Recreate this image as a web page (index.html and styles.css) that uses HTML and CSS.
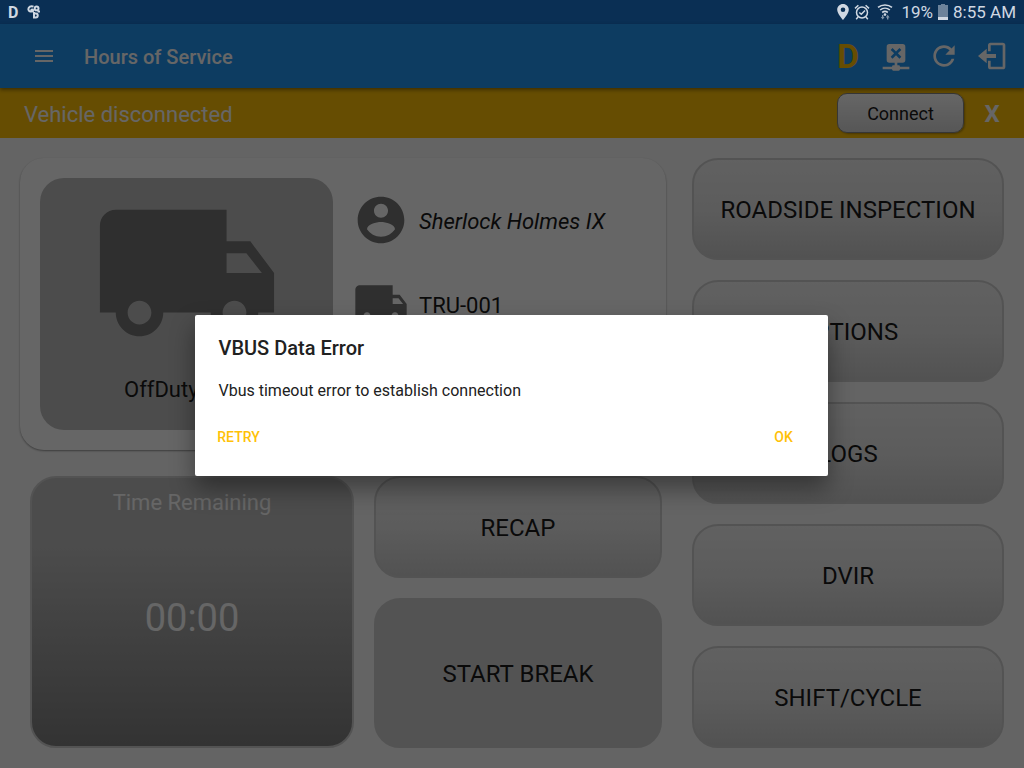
FILE: index.html
```html
<!DOCTYPE html>
<html lang="en">
  <head>
    <meta charset="UTF-8" />
    <meta name="viewport" content="width=device-width, initial-scale=1.0" />
    <title>Hours of Service</title>
    <link rel="stylesheet" href="styles.css" />
  </head>
  <body>
    <!-- icons used more than once -->
    <svg class="sprite" aria-hidden="true">
      <symbol id="truck" viewBox="0 0 24 24">
        <path
          d="M20 8h-3V4H3c-1.1 0-2 .9-2 2v11h2c0 1.66 1.34 3 3 3s3-1.34 3-3h6c0 1.66 1.34 3 3 3s3-1.34 3-3h2v-5l-3-4zM6 18.5c-.83 0-1.5-.67-1.5-1.5s.67-1.5 1.5-1.5 1.5.67 1.5 1.5-.67 1.5-1.5 1.5zm13.5-9l1.96 2.5H17V9.5h2.5zm-1.5 9c-.83 0-1.5-.67-1.5-1.5s.67-1.5 1.5-1.5 1.5.67 1.5 1.5-.67 1.5-1.5 1.5z"
        />
      </symbol>
    </svg>

    <div class="status-bar">
      <div class="status-group">
        <span class="status-duty">D</span>
        <svg class="status-app" viewBox="0 0 14 14">
          <g fill="none" stroke="currentColor" stroke-width="2">
            <path d="M6.5 1.6C4 .4 1.2 2 1.4 4.4c.2 2 2.2 2.6 3.8 1.6" />
            <circle cx="9.6" cy="3.4" r="1.900" />
            <circle cx="5.200" cy="5.400" r="1" />
            <path d="M7 7v5.500h1.800c2.600 0 2.600-4 0-4H7" />
            <path d="M10.500 6.500h2.500" />
          </g>
        </svg>
      </div>
      <div class="status-group">
        <svg class="status-pin" viewBox="0 0 12 16">
          <path
            fill-rule="evenodd"
            d="M6 0C2.700 0 .2 2.500.2 5.700.2 9.500 6 16 6 16s5.800-6.500 5.800-10.300C11.800 2.500 9.300 0 6 0zm0 3.400a2.300 2.300 0 1 1 0 4.600 2.300 2.300 0 0 1 0-4.600z"
          />
        </svg>
        <svg class="status-alarm" viewBox="0 0 16 16">
          <g fill="none" stroke="currentColor" stroke-width="1.500">
            <circle cx="8" cy="8.500" r="5.500" />
            <path d="M1 4.400L4.400 1.200M15 4.400l-3.400-3.200M4 13l-1.800 2.200M12 13l1.800 2.200M5.300 8.500l2 1.800L11 6.500" />
          </g>
        </svg>
        <svg class="status-wifi" viewBox="0 0 16 16">
          <g fill="none" stroke="currentColor" stroke-width="1.600">
            <path d="M1 3.400c4-3.200 10-3.200 14 0M3.100 6c2.900-2.400 6.900-2.400 9.800 0M5.200 8.500c1.700-1.300 3.900-1.300 5.600 0" />
          </g>
          <circle cx="8" cy="10.600" r="1.300" />
          <path opacity=".6" d="M3.800 13H5v-2h1.400v2h1.200l-1.900 2.600zM8.800 13.400l1.900-2.600 1.900 2.600h-1.200v2H10v-2z" />
        </svg>
        <span>19%</span>
        <svg class="status-battery" viewBox="0 0 10 16">
          <path opacity=".5" d="M3 0h4v1h3v12H0V1h3z" />
          <path d="M0 13h10v3H0z" />
        </svg>
        <span>8:55 AM</span>
      </div>
    </div>

    <header class="app-bar">
      <button type="button" class="menu-button" aria-label="Menu">
        <svg viewBox="0 0 24 24">
          <path d="M3 18h18v-2H3v2zm0-5h18v-2H3v2zm0-7v2h18V6H3z" />
        </svg>
      </button>
      <h1>Hours of Service</h1>
      <button type="button" class="icon-button duty">D</button>
      <button type="button" class="icon-button" aria-label="Vehicle connection">
        <svg viewBox="0 0 24 24">
          <path
            d="M14.590 6L12 8.590 9.410 6 8 7.410 10.590 10 8 12.590 9.410 14 12 11.410 14.590 14 16 12.590 13.410 10 16 7.410zM17 3a2 2 0 0 1 2 2v10a2 2 0 0 1-2 2h-4v2h1a1 1 0 0 1 1 1h7v2h-7a1 1 0 0 1-1 1h-4a1 1 0 0 1-1-1H2v-2h7a1 1 0 0 1 1-1h1v-2H7a2 2 0 0 1-2-2V5a2 2 0 0 1 2-2z"
          />
        </svg>
      </button>
      <button type="button" class="icon-button" aria-label="Refresh">
        <svg viewBox="0 0 24 24">
          <path
            d="M17.650 6.350C16.200 4.900 14.210 4 12 4c-4.420 0-7.990 3.580-7.990 8s3.570 8 7.990 8c3.730 0 6.840-2.550 7.730-6h-2.080c-.82 2.330-3.040 4-5.650 4-3.310 0-6-2.690-6-6s2.690-6 6-6c1.660 0 3.140.69 4.220 1.780L13 11h7V4l-2.350 2.350z"
          />
        </svg>
      </button>
      <button type="button" class="icon-button" aria-label="Log out">
        <svg viewBox="0 0 24 24">
          <path
            fill="none"
            stroke="currentColor"
            stroke-width="2"
            d="M10 8.500V4a1 1 0 0 1 1-1h9a1 1 0 0 1 1 1v16a1 1 0 0 1-1 1h-9a1 1 0 0 1-1-1v-4.500"
          />
          <path d="M1.500 12L8 6.500v4h7v3H8v4z" />
        </svg>
      </button>
    </header>

    <div class="banner">
      <span class="banner-text">Vehicle disconnected</span>
      <button type="button" class="connect-button">Connect</button>
      <button type="button" class="banner-close">X</button>
    </div>

    <main>
      <div class="left">
        <section class="driver-card">
          <div class="duty-status">
            <svg class="duty-icon"><use href="#truck" /></svg>
            <span class="duty-label">OffDuty</span>
          </div>
          <div class="driver-info">
            <div class="info-row">
              <svg class="info-icon" viewBox="0 0 24 24">
                <path
                  d="M12 2C6.480 2 2 6.480 2 12s4.480 10 10 10 10-4.480 10-10S17.520 2 12 2zm0 3c1.660 0 3 1.340 3 3s-1.340 3-3 3-3-1.340-3-3 1.340-3 3-3zm0 14.200c-2.500 0-4.710-1.280-6-3.220.03-1.990 4-3.080 6-3.080 1.990 0 5.970 1.090 6 3.080-1.290 1.940-3.500 3.220-6 3.220z"
                />
              </svg>
              <em>Sherlock Holmes IX</em>
            </div>
            <div class="info-row">
              <svg class="info-icon"><use href="#truck" /></svg>
              <span>TRU-001</span>
            </div>
          </div>
        </section>
        <div class="lower">
          <section class="timer">
            <span class="timer-label">Time Remaining</span>
            <span class="timer-value">00:00</span>
          </section>
          <div class="actions">
            <button type="button" class="tile">RECAP</button>
            <button type="button" class="tile tile-flat">START BREAK</button>
          </div>
        </div>
      </div>
      <nav class="right">
        <button type="button" class="tile">ROADSIDE INSPECTION</button>
        <button type="button" class="tile">OPTIONS</button>
        <button type="button" class="tile">LOGS</button>
        <button type="button" class="tile">DVIR</button>
        <button type="button" class="tile">SHIFT/CYCLE</button>
      </nav>
    </main>

    <div class="scrim">
      <div class="dialog" role="alertdialog" aria-labelledby="dialogTitle" aria-describedby="dialogText">
        <h2 id="dialogTitle">VBUS Data Error</h2>
        <p id="dialogText">Vbus timeout error to establish connection</p>
        <div class="dialog-actions">
          <button type="button">RETRY</button>
          <button type="button">OK</button>
        </div>
      </div>
    </div>
  </body>
</html>
```
FILE: styles.css
```css
* {
  box-sizing: border-box;
}
body {
  margin: 0;
  min-height: 100vh;
  display: flex;
  flex-direction: column;
  position: relative;
  font-family: Roboto, sans-serif;
  color: #1a1a1a;
  background-color: #fafafa;
}
button {
  font: inherit;
  color: inherit;
  background: none;
  border: 0;
  padding: 0;
  cursor: pointer;
}
svg {
  display: block;
  fill: currentColor;
}
h1,
h2,
p {
  margin: 0;
}
.sprite {
  display: none;
}

/* Status bar */
.status-bar {
  display: flex;
  justify-content: space-between;
  height: 24px;
  padding: 0 8px;
  background-color: #0a2f54;
  color: #d0d8e2;
  font-size: 17px;
}
.status-group {
  display: flex;
  align-items: center;
  gap: 5px;
}
.status-duty {
  font-size: 16px;
  font-weight: 700;
}
.status-app {
  width: 14px;
  height: 14px;
  margin-left: 4px;
}
.status-pin {
  width: 12px;
  height: 16px;
}
.status-alarm {
  width: 16px;
  height: 16px;
}
.status-wifi {
  width: 16px;
  height: 16px;
  margin: 0 4px 0 2px;
}
.status-battery {
  width: 10px;
  height: 16px;
}

/* App bar */
.app-bar {
  display: flex;
  align-items: center;
  height: 64px;
  padding: 0 8px 0 32px;
  background-color: #2196f3;
  color: #fff;
  position: relative;
  box-shadow: 0 2px 4px rgba(0, 0, 0, 0.4);
}
.app-bar h1 {
  flex: 1;
  padding-top: 2px;
  font-size: 20px;
  font-weight: 500;
  line-height: 24px;
}
.menu-button {
  margin-right: 28px;
}
.menu-button svg {
  width: 24px;
  height: 24px;
}
.icon-button {
  width: 48px;
  height: 48px;
  display: flex;
  align-items: center;
  justify-content: center;
}
.icon-button svg {
  width: 32px;
  height: 32px;
}
.duty {
  color: #ffc107;
  font-size: 34px;
  font-weight: 700;
}

/* Connection banner */
.banner {
  display: flex;
  align-items: center;
  height: 50px;
  padding: 0 8px 0 24px;
  background-color: #ffc107;
  color: #fff;
  font-size: 22px;
}
.banner-text,
.banner-close {
  padding-top: 2px;
}
.banner-text {
  flex: 1;
}
.connect-button {
  width: 127px;
  height: 40px;
  border: 1px solid #888;
  border-radius: 10px;
  background-image: linear-gradient(#fff, #d8d8d8);
  box-shadow: 1px 1px 2px rgba(0, 0, 0, 0.3);
  color: #1a1a1a;
  font-size: 18px;
}
.banner-close {
  width: 48px;
  margin-left: 4px;
  font-size: 24px;
  font-weight: 700;
}

/* Dashboard */
main {
  flex: 1;
  display: flex;
  gap: 26px;
  padding: 20px;
}
.left {
  flex: 646;
  display: flex;
  flex-direction: column;
  gap: 26px;
}
.right {
  flex: 312;
  display: flex;
  flex-direction: column;
  gap: 20px;
}
.driver-card {
  display: flex;
  gap: 20px;
  padding: 20px;
  background-color: #fff;
  border-radius: 24px;
  box-shadow: 0 1px 2px rgba(0, 0, 0, 0.4);
}
.duty-status {
  flex: 293;
  height: 252px;
  border-radius: 24px;
  background-color: #bebebe;
  font-size: 22px;
}
.duty-icon {
  width: 190px;
  height: 190px;
  margin: 0 auto;
  color: #757575;
}
.duty-label {
  display: block;
  padding-left: 84px;
  line-height: 44px;
}
.driver-info {
  flex: 293;
  font-size: 22px;
}
.info-row {
  display: flex;
  align-items: center;
  gap: 10px;
  height: 84px;
}
.info-row em,
.info-row span {
  padding-top: 2px;
}
.info-icon {
  width: 56px;
  height: 56px;
  color: #757575;
}
.lower {
  flex: 1;
  display: grid;
  grid-template-columns: 324fr 288fr;
  gap: 20px;
  padding: 0 4px 0 10px;
}
.timer {
  display: flex;
  flex-direction: column;
  padding: 12px 0 26px;
  border: 2px solid #cfcfcf;
  border-radius: 26px;
  background-image: linear-gradient(#bebebe 25%, #808080);
  color: #fff;
  text-align: center;
}
.timer-label {
  font-size: 22px;
  line-height: 26px;
}
.timer-value {
  flex: 1;
  display: flex;
  align-items: center;
  justify-content: center;
  font-size: 38px;
}
.actions {
  display: flex;
  flex-direction: column;
  gap: 20px;
}
.tile {
  height: 102px;
  padding-top: 2px;
  border: 2px solid #d0d0d0;
  border-radius: 26px;
  background-image: linear-gradient(#f2f2f2, #e6e6e6 50%, #cdcdcd);
  font-size: 24px;
}
.tile-flat {
  flex: 1;
  background: #d0d0d0;
}

/* Error dialog */
.scrim {
  position: absolute;
  top: 24px;
  right: 0;
  bottom: 0;
  left: 0;
  display: flex;
  align-items: center;
  justify-content: center;
  padding: 0 2px 2px 0;
  background-color: rgba(0, 0, 0, 0.6);
}
.dialog {
  width: 633px;
  max-width: 90%;
  padding: 21px 0;
  border-radius: 2px;
  background-color: #fff;
  box-shadow: 0 12px 24px rgba(0, 0, 0, 0.4);
  color: #212121;
}
.dialog h2 {
  padding: 0 24px;
  font-size: 20px;
  font-weight: 500;
  line-height: 24px;
}
.dialog p {
  padding: 19px 24px 16px;
  font-size: 16px;
  line-height: 24px;
}
.dialog-actions {
  display: flex;
  justify-content: space-between;
  padding: 0 12px;
}
.dialog-actions button {
  min-width: 64px;
  height: 36px;
  color: #ffc107;
  font-size: 14px;
  font-weight: 500;
}
```
